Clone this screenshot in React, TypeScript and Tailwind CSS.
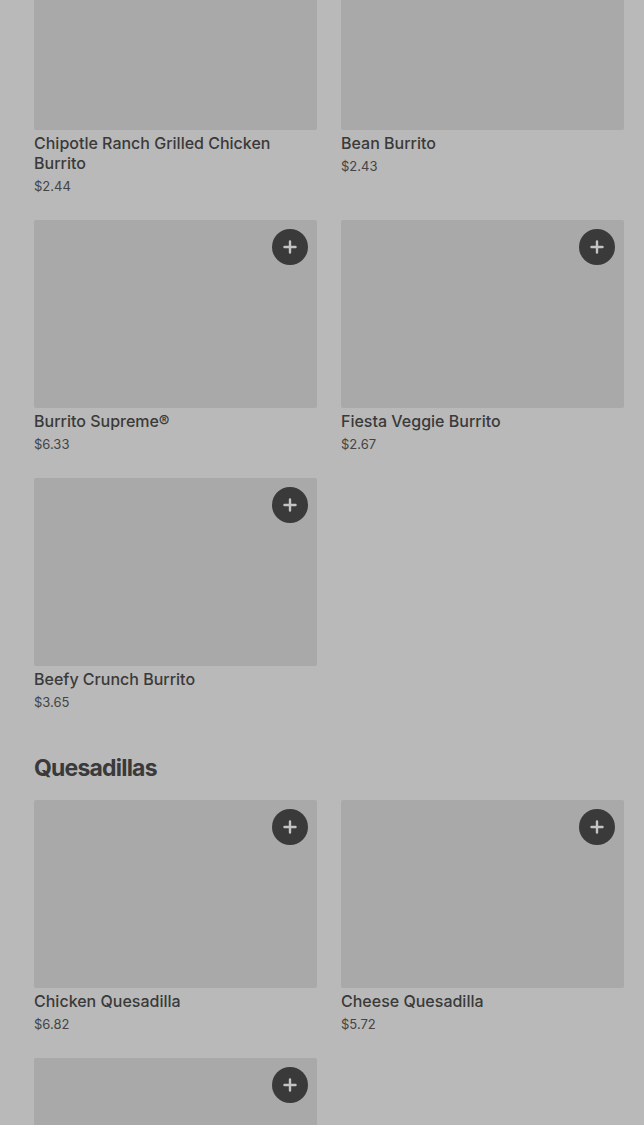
import React from "react";

type Item = { name: string; price: string; showAdd?: boolean; hideText?: boolean };

function Card({ item }: { item: Item }) {
  return (
    <div className="flex flex-col">
      <div className="relative h-[188px] bg-[#a9a9a9] rounded-[2px]">
        {item.showAdd !== false && (
          <button className="absolute right-[9px] top-[9px] w-9 h-9 rounded-full bg-[#3a3a3a] flex items-center justify-center">
            <svg width="14" height="14" viewBox="0 0 14 14">
              <path d="M7 1.5v11M1.5 7h11" stroke="#c4c4c4" strokeWidth="2.4" strokeLinecap="round" />
            </svg>
          </button>
        )}
      </div>
      {!item.hideText && (
        <>
          <div className="pt-[3px] text-[16px] leading-[20px] font-medium text-[#3a3a3a]">{item.name}</div>
          <div className="mt-[3px] text-[13px] leading-[20px] text-[#444]">{item.price}</div>
        </>
      )}
    </div>
  );
}

export default function App() {
  const burritos: Item[] = [
    { name: "Chipotle Ranch Grilled Chicken Burrito", price: "$2.44", showAdd: false },
    { name: "Bean Burrito", price: "$2.43", showAdd: false },
    { name: "Burrito Supreme®", price: "$6.33" },
    { name: "Fiesta Veggie Burrito", price: "$2.67" },
    { name: "Beefy Crunch Burrito", price: "$3.65" },
  ];
  const quesadillas: Item[] = [
    { name: "Chicken Quesadilla", price: "$6.82" },
    { name: "Cheese Quesadilla", price: "$5.72" },
    { name: "Steak Quesadilla", price: "$7.19", hideText: true },
  ];
  return (
    <div
      className="w-[644px] h-[1125px] overflow-hidden bg-[#b9b9b9]"
      style={{ fontFamily: "Inter, 'Noto Sans', sans-serif" }}
    >
      <div className="mt-[-58px] pl-[34px] pr-[20px]">
        <div className="grid grid-cols-2 gap-x-6 gap-y-6">
          {burritos.map((b) => (
            <Card key={b.name} item={b} />
          ))}
        </div>
        <h2 className="mt-[41px] text-[23px] leading-[30px] font-bold tracking-[-0.8px] text-[#3a3a3a]">
          Quesadillas
        </h2>
        <div className="mt-[17px] grid grid-cols-2 gap-x-6 gap-y-6">
          {quesadillas.map((b) => (
            <Card key={b.name} item={b} />
          ))}
        </div>
      </div>
    </div>
  );
}
